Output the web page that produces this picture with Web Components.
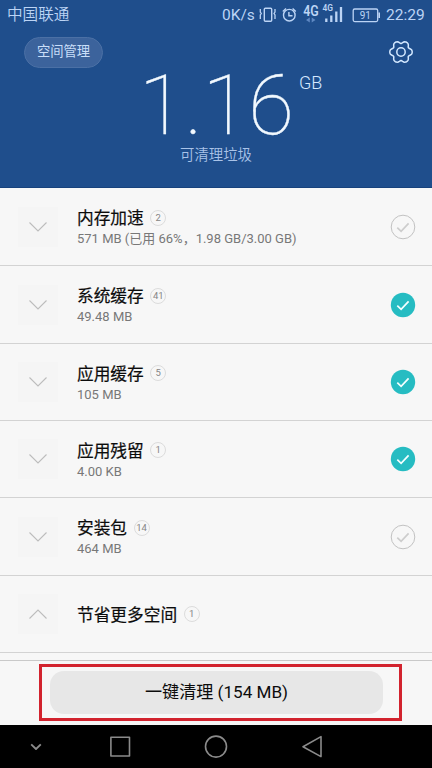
<!DOCTYPE html>
<html lang="zh-CN">
<head>
<meta charset="utf-8">
<title>空间管理</title>
<style>
html,body{margin:0;height:100%}
body{font-family:Roboto,"Noto Sans CJK SC",sans-serif;overflow:hidden}
</style>
</head>
<body>
<phone-screen>
  <clean-header slot="header" amount="1.16" unit="GB" caption="可清理垃圾" action="空间管理"></clean-header>
  <junk-row style="height:78px" name="内存加速" count="2" detail="571 MB (已用 66%，1.98 GB/3.00 GB)" check="off"></junk-row>
  <junk-row style="height:78px" name="系统缓存" count="41" detail="49.48 MB" check="on"></junk-row>
  <junk-row style="height:77px" name="应用缓存" count="5" detail="105 MB" check="on"></junk-row>
  <junk-row style="height:77px" name="应用残留" count="1" detail="4.00 KB" check="on"></junk-row>
  <junk-row style="height:78px" name="安装包" count="14" detail="464 MB" check="off"></junk-row>
  <junk-row style="height:77px" name="节省更多空间" count="1" open></junk-row>
  <clean-footer slot="footer">一键清理 (154 MB)</clean-footer>
  <nav-bar slot="nav"></nav-bar>
</phone-screen>
<script>
class Base extends HTMLElement{
  connectedCallback(){
    if(!this.shadowRoot) this.attachShadow({mode:'open'}).innerHTML=this.view();
  }
  a(n){return this.getAttribute(n)||''}
}
customElements.define('phone-screen',class extends Base{view(){return `
<style>
:host{display:flex;flex-direction:column;width:432px;height:768px;background:#f7f7f7;overflow:hidden}
main{flex:1;min-height:0;overflow:hidden}
</style>
<slot name="header"></slot><main><slot></slot></main><slot name="footer"></slot><slot name="nav"></slot>`}});

customElements.define('status-bar',class extends Base{view(){return `
<style>
:host{display:flex;height:30px;align-items:center;padding:0 8px 0 7px;color:#bcd4f5;font-size:15.5px;line-height:30px;white-space:nowrap}
.carrier{flex:1;font-size:15.6px;font-weight:350}
svg{display:block;flex:none}
.speed{width:37px}
.time{margin-left:6px;width:38px}
</style>
<span class="carrier">中国联通</span><span class="speed">0K/s</span>
<svg width="121" height="30" viewBox="259 0 121 30" fill="none" stroke="#bcd4f5">
  <rect x="264.3" y="8.2" width="7.4" height="13" rx="1" stroke-width="1.4"/>
  <path d="M260.3 9v3l1 1.500-1 1.500v4M275 9v3l-1 1.500 1 1.500v4" stroke-width="1.300"/>
  <circle cx="289.300" cy="15.200" r="5.800" stroke-width="1.400"/>
  <path d="M282.800 11.400l3.200-3M295.800 11.400l-3.200-3M288.900 12v3.800h3.600" stroke-width="1.400"/>
  <text x="303.300" y="16" font-size="14" font-weight="600" fill="#bcd4f5" stroke="none" textLength="15.500" lengthAdjust="spacingAndGlyphs">4G</text>
  <path d="M309.800 17.500v5L306 20zM311.700 17.500v5L315.500 20z" fill="#5f88c2" stroke="none"/>
  <text x="322.500" y="11" font-size="8.500" font-weight="600" fill="#bcd4f5" stroke="none" textLength="10.500" lengthAdjust="spacingAndGlyphs">4G</text>
  <path d="M326.300 18.500v3.500M331.300 15.500v6.500M336.300 11.500v10.500M341 7v15" stroke-width="2.300"/>
  <rect x="353.200" y="9" width="24.500" height="12.600" rx="1.500" stroke-width="1.300"/>
  <path d="M379.200 12.500v5.500" stroke-width="1.600"/>
  <text x="365.300" y="18.800" text-anchor="middle" font-size="10" fill="#bcd4f5" stroke="none">91</text>
</svg><span class="time">22:29</span>`}});

/* Six-lobed outline of the settings gear, centred on the origin */
const gearPath=Array.from({length:72},(_,i)=>{
  const t=i*Math.PI/36,r=10.1+1.35*Math.cos(6*t)-.25*Math.cos(12*t);
  return (i?'L':'M')+(r*Math.cos(t)).toFixed(2)+' '+(r*Math.sin(t)).toFixed(2);
}).join('')+'Z';

customElements.define('clean-header',class extends Base{view(){return `
<style>
:host{display:flex;flex-direction:column;box-sizing:border-box;height:188px;flex:none;background:#1f4e8c;border-bottom:1px solid #17427c}
.bar{display:flex;justify-content:space-between;align-items:flex-start;height:38px;padding:7px 18px 0 24px}
.pill{box-sizing:border-box;width:79px;height:31px;border-radius:15.5px;background:#3c639c;border:1px solid #4b70a5;color:#c9def9;font-size:13.300px;line-height:28px;text-align:center}
.gear{margin-top:2px}
.num{display:grid;grid-template-columns:158px auto;justify-content:start;align-items:start;padding-left:139px;height:69px;color:#f2f9ff}
.big{font-family:Roboto,sans-serif;font-size:83.500px;font-weight:100;line-height:70px;margin-top:-4.500px;-webkit-text-stroke:.35px #f2f9ff}
.unit{font-size:18px;font-weight:300;line-height:20px;margin-top:-2px;margin-left:2px;color:#d5e8ff}
.cap{font-size:14.400px;line-height:20px;text-align:center;color:#a9c3e8;font-weight:350;margin-top:2px}
</style>
<status-bar></status-bar>
<div class="bar"><div class="pill">${this.a('action')}</div>
<svg class="gear" width="26" height="26" viewBox="-13 -13 26 26" fill="none" stroke="#d3e8ff" stroke-width="1.500" stroke-linejoin="round">
<path d="${gearPath}"/><circle r="4.200"/></svg></div>
<div class="num"><span class="big">${this.a('amount')}</span><span class="unit">${this.a('unit')}</span></div>
<div class="cap">${this.a('caption')}</div>`}});

customElements.define('check-mark',class extends Base{view(){
const on=this.hasAttribute('on');
return `<style>:host{display:block;width:26px;height:26px}svg{display:block}</style>
<svg width="26" height="26" viewBox="-13 -13 26 26" fill="none">
<circle r="${on?12.2:11.8}" fill="${on?'#26bcc2':'none'}" stroke="${on?'none':'#c2c2c2'}"/>
<path d="M-5.700.6L-1.900 4.300L5.600-3.700" stroke="${on?'#f4ffff':'#cdcdcd'}" stroke-width="1.700"/></svg>`}});

customElements.define('junk-row',class extends Base{view(){
const open=this.hasAttribute('open'),c=this.a('check');
return `
<style>
:host{display:flex;align-items:center;box-sizing:border-box;border-bottom:1px solid #d3d3d3;padding:0 16px 0 18px}
.chev{flex:none;width:40px;height:40px;background:#f5f5f5;margin-right:19px}
.text{flex:1;padding-top:3px;white-space:nowrap}
.single{padding-top:1px}
.title{display:flex;align-items:center;height:22px;font-size:16.700px;line-height:22px;color:#0c0c0c}
.name{padding-top:2px;-webkit-text-stroke:.2px #0c0c0c}
.badge{box-sizing:border-box;width:16px;height:16px;border:1px solid #dcdcdc;border-radius:50%;font-size:9.500px;line-height:14px;text-align:center;color:#858585;margin:-1px 0 0 6.500px}
.badge span{display:block;margin:0 -2px}
.sub{font-size:13px;line-height:20px;color:#787878}
</style>
<svg class="chev" viewBox="-20 -20 40 40" fill="none" stroke="#bcbcbc" stroke-width="1.100"><path d="${open?'M-8.500 4.500L0-4L8.500 4.500':'M-8.500-4.500L0 4L8.500-4.500'}"/></svg>
<div class="text ${open?'single':''}"><div class="title"><span class="name">${this.a('name')}</span><div class="badge"><span>${this.a('count')}</span></div></div>
${this.a('detail')?`<div class="sub">${this.a('detail')}</div>`:''}</div>
${c?`<check-mark ${c==='on'?'on':''}></check-mark>`:''}`}});

customElements.define('clean-footer',class extends Base{view(){return `
<style>
:host{display:block;box-sizing:border-box;flex:none;height:65px;border-top:1px solid #c9c9c9;padding:3px 30px 0 39px;background:#f7f7f7}
.frame{box-sizing:border-box;height:57px;border:3px solid #d2232e;padding:4px 16px 0 8px}
button{display:block;box-sizing:border-box;width:333px;height:43px;border:0;border-radius:14px;background:#e7e7e7;font:17.100px/43px Roboto,"Noto Sans CJK SC",sans-serif;color:#0c0c0c;padding:0}
</style>
<div class="frame"><button><slot></slot></button></div>`}});

customElements.define('nav-bar',class extends Base{view(){return `
<style>
:host{display:block;flex:none;height:43px;background:#000}svg{display:block}
</style>
<svg width="432" height="43" viewBox="0 725 432 43" fill="none" stroke="#8b8b8b" stroke-width="1.600" stroke-linejoin="round">
<path d="M31.200 744.300L36 749L40.800 744.300" stroke-width="1.800"/>
<rect x="110.900" y="737.300" width="18.600" height="18.700"/>
<circle cx="216" cy="746.600" r="10.500"/>
<path d="M303 746.700L321 736.600V756.600Z"/></svg>`}});
</script>
</body>
</html>
